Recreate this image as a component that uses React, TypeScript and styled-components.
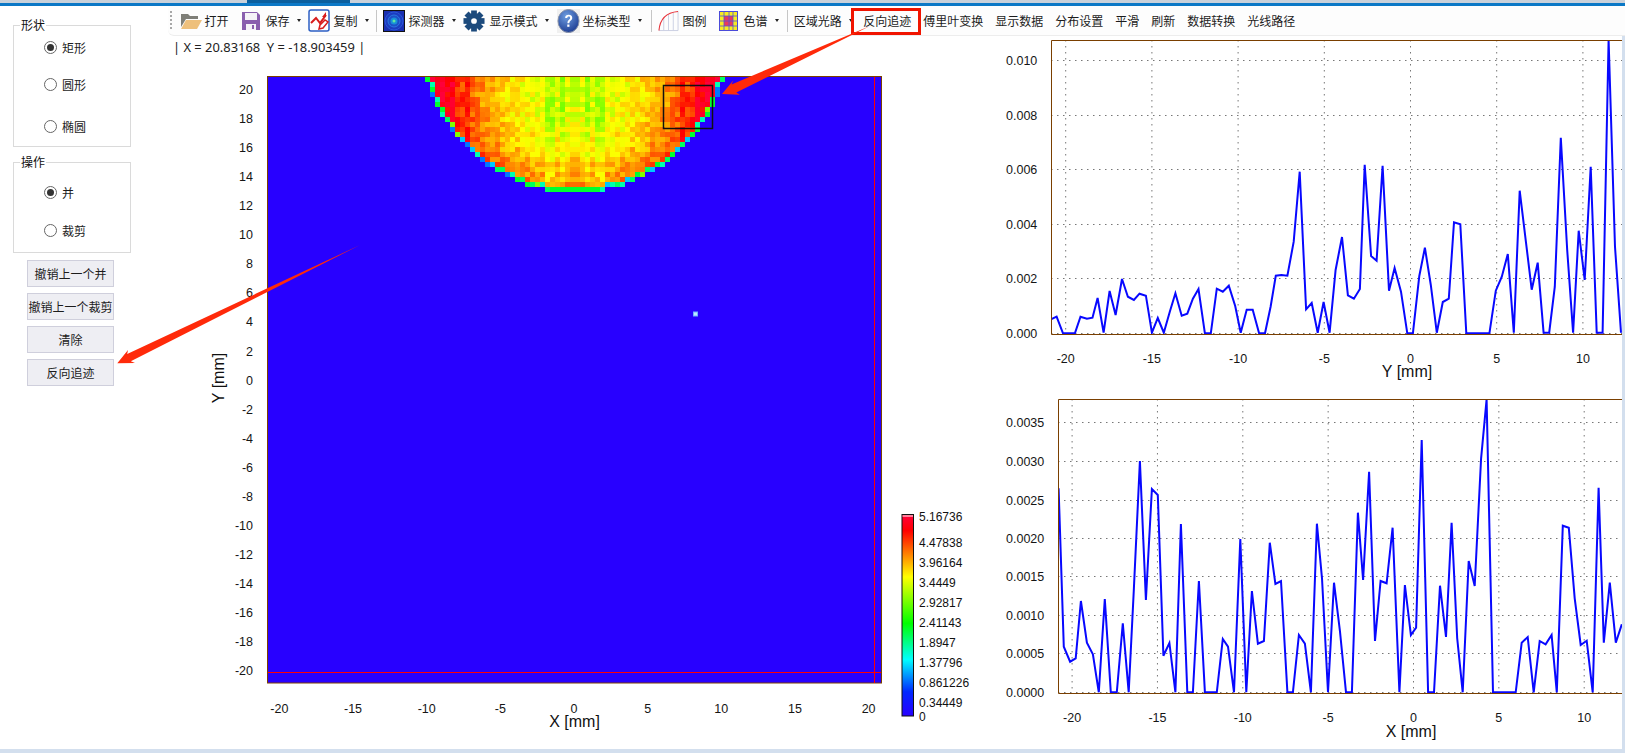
import { useMemo } from 'react';
import styled, { createGlobalStyle } from 'styled-components';

const CJK = `"Noto Sans CJK SC", "Noto Sans", sans-serif`;
const PLOT_BLUE = '#2800ff';
const BROWN = '#7a3f00';

// samples read off the screenshot, in crop pixels (x / 2.509, y / 3)
const PROFILE_Y = [
  [128, 868], [142, 860], [158, 910], [188, 910], [202, 860], [218, 866], [232, 863], [245, 804], [260, 908], [275, 783],
  [290, 855], [306, 747], [321, 800], [336, 810], [350, 791], [366, 797], [381, 908], [396, 864], [411, 908], [426, 845],
  [440, 790], [456, 857], [470, 851], [484, 806], [498, 777], [514, 910], [529, 910], [544, 776], [559, 785], [574, 767],
  [590, 828], [604, 908], [619, 839], [634, 839], [650, 910], [665, 910], [679, 830], [692, 737], [706, 735], [721, 737],
  [737, 635], [752, 425], [768, 838], [782, 819], [797, 908], [812, 816], [827, 908], [842, 720], [858, 621], [873, 796],
  [888, 806], [903, 777], [915, 404], [931, 678], [945, 692], [960, 407], [976, 782], [990, 714], [1006, 785], [1022, 910],
  [1036, 910], [1052, 738], [1066, 653], [1081, 765], [1096, 908], [1111, 816], [1126, 806], [1139, 577], [1155, 583], [1170, 910],
  [1228, 910], [1244, 782], [1259, 740], [1274, 672], [1289, 908], [1304, 482], [1320, 640], [1334, 779], [1349, 698], [1364, 908],
  [1378, 908], [1392, 770], [1407, 323], [1423, 660], [1438, 908], [1452, 602], [1467, 750], [1482, 410], [1497, 908], [1512, 908],
  [1527, 30], [1543, 650], [1558, 908],
];

const PROFILE_X = [
  [147, 340], [160, 815], [176, 860], [190, 850], [203, 678], [218, 803], [233, 838], [248, 952], [263, 672], [278, 952],
  [293, 952], [308, 745], [323, 952], [336, 640], [351, 258], [366, 675], [381, 342], [396, 360], [410, 842], [425, 804],
  [440, 952], [454, 447], [470, 952], [484, 952], [499, 618], [514, 952], [544, 952], [559, 792], [572, 815], [587, 952],
  [603, 492], [618, 952], [632, 648], [647, 806], [662, 798], [677, 503], [691, 627], [705, 618], [721, 952], [735, 952],
  [750, 780], [765, 806], [780, 952], [795, 446], [808, 610], [823, 952], [838, 623], [853, 770], [868, 952], [883, 952],
  [898, 413], [911, 615], [926, 290], [941, 798], [955, 618], [970, 625], [985, 458], [1002, 952], [1016, 630], [1031, 780],
  [1044, 758], [1058, 195], [1074, 952], [1089, 952], [1104, 632], [1119, 786], [1133, 443], [1147, 790], [1161, 952], [1176, 558],
  [1191, 633], [1207, 250], [1221, 73], [1237, 952], [1294, 952], [1309, 803], [1324, 786], [1339, 952], [1354, 798], [1369, 808],
  [1384, 780], [1397, 952], [1412, 452], [1427, 458], [1442, 670], [1457, 810], [1472, 797], [1487, 952], [1502, 338], [1515, 803],
  [1530, 623], [1545, 803], [1560, 748],
];

const GlobalStyle = createGlobalStyle`
  html, body {
    margin: 0;
    height: 100%;
    background: #fff;
    overflow: hidden;
  }
  #root {
    height: 100%;
  }
`;

const Page = styled.div`
  position: relative;
  width: 1625px;
  height: 753px;
  display: flex;
  flex-direction: column;
  overflow: hidden;
  font-family: ${CJK};
  font-size: 12px;
  color: #1c1c1c;
`;

const TopStrip = styled.div`
  flex: 0 0 auto;
  height: 3px;
  padding-left: 247px;
  background: #c9d1da;
  border-bottom: 3px solid #0b78c6;
`;

const ActiveTab = styled.div`
  width: 103px;
  height: 3px;
  background: #0b5f9e;
`;

const Main = styled.div`
  flex: 1;
  min-height: 0;
  display: flex;
`;

const BottomBar = styled.div`
  flex: 0 0 4px;
  background: #d3dfee;
`;

const SidePanel = styled.aside`
  flex: 0 0 168px;
  padding: 11px 0 0 13px;
  box-sizing: border-box;
  display: flex;
  flex-direction: column;
`;

const GroupBox = styled.fieldset<{ $height: number }>`
  width: 118px;
  height: ${(p) => p.$height}px;
  margin: 0 0 7px;
  padding: 0;
  box-sizing: border-box;
  border: 1px solid #dadada;
  min-inline-size: 0;
`;

const GroupTitle = styled.legend`
  margin-left: 6px;
  padding: 0 1px;
  line-height: 16px;
  font-size: 12px;
  color: #111;
`;

const RadioRow = styled.label<{ $top: number }>`
  display: flex;
  align-items: center;
  gap: 5px;
  height: 16px;
  margin: ${(p) => p.$top}px 0 0 30px;
`;

const RadioMark = styled.span<{ $checked?: boolean }>`
  width: 13px;
  height: 13px;
  box-sizing: border-box;
  border-radius: 50%;
  border: 1px solid #666;
  background: #fff;
  display: flex;
  align-items: center;
  justify-content: center;

  &::after {
    content: '';
    display: ${(p) => (p.$checked ? 'block' : 'none')};
    width: 7px;
    height: 7px;
    border-radius: 50%;
    background: #333;
  }
`;

const ActionStack = styled.div`
  display: flex;
  flex-direction: column;
  gap: 6px;
  margin-left: 14px;
`;

const ActionButton = styled.button`
  width: 87px;
  height: 27px;
  padding: 0;
  box-sizing: border-box;
  border: 1px solid #cfcfdc;
  background: #eeeef3;
  font-family: ${CJK};
  font-size: 12px;
  color: #1c1c1c;
  white-space: nowrap;
  overflow: hidden;
`;

const Workspace = styled.div`
  flex: 1;
  min-width: 0;
  display: flex;
  flex-direction: column;
`;

const Toolbar = styled.div`
  flex: 0 0 30px;
  display: flex;
  align-items: center;
  box-sizing: border-box;
  background: #fdfdfd;
  border-bottom: 1px solid #ededed;
  border-bottom-left-radius: 6px;
  white-space: nowrap;
`;

const Grip = styled.span`
  width: 2px;
  height: 20px;
  margin: 0 7.5px 0 2px;
  background: repeating-linear-gradient(to bottom, #a8a8a8 0 2px, transparent 2px 4px);
`;

const ToolButton = styled.div<{ $gap?: number; $end?: number }>`
  display: flex;
  align-items: center;
  margin-right: ${(p) => p.$end ?? 12}px;
  line-height: 16px;

  svg {
    margin-right: ${(p) => p.$gap ?? 3}px;
  }
`;

const Caret = styled.span`
  width: 0;
  height: 0;
  margin-left: 7px;
  border-left: 2.5px solid transparent;
  border-right: 2.5px solid transparent;
  border-top: 3px solid #222;
`;

const ToolSeparator = styled.span`
  width: 1px;
  height: 22px;
  margin-right: 6px;
  background: #c6c6c6;
`;

const HighlightedItem = styled.div`
  position: relative;
  margin: 0 12px 0 3.5px;
  line-height: 16px;

  &::after {
    content: '';
    position: absolute;
    left: -12px;
    right: -9.5px;
    top: -5px;
    bottom: -6px;
    border: 3px solid #f01400;
  }
`;

const Content = styled.div`
  flex: 1;
  min-height: 0;
  display: flex;
`;

const CenterColumn = styled.section`
  flex: 0 0 832px;
  display: flex;
  flex-direction: column;
`;

const StatusText = styled.div`
  flex: 0 0 22px;
  padding-left: 5px;
  line-height: 22px;
  font-family: 'Noto Sans', sans-serif;
  font-size: 12.9px;
  white-space: pre;
  color: #222;
`;

const ProfileColumn = styled.section`
  flex: 1;
  display: flex;
  flex-direction: column;
`;

const RightEdge = styled.div`
  flex: 0 0 3px;
  background: #d3dfee;
`;

const DrawingSvg = styled.svg`
  display: block;
  overflow: hidden;
`;

const TickLabel = styled.text`
  font-family: 'Liberation Sans', Arial, sans-serif;
  font-size: 12.5px;
  fill: #151515;
`;

const AxisLabel = styled.text`
  font-family: 'Liberation Sans', Arial, sans-serif;
  font-size: 16px;
  fill: #111;
  text-anchor: middle;
`;

const ScaleLabel = styled.text`
  font-family: 'Liberation Sans', Arial, sans-serif;
  font-size: 12px;
  fill: #111;
`;

const ArrowLayer = styled.svg`
  position: absolute;
  left: 0;
  top: 0;
  pointer-events: none;
`;

const jetStops: [number, number[]][] = [
  [0, [40, 0, 255]],
  [0.12, [0, 40, 255]],
  [0.28, [0, 255, 255]],
  [0.46, [0, 255, 0]],
  [0.69, [255, 255, 0]],
  [0.92, [255, 0, 0]],
  [1, [255, 0, 60]],
];

function jet(v: number) {
  const t = Math.max(0, Math.min(1, v));
  for (let i = 1; i < jetStops.length; i++) {
    const [pos, rgb] = jetStops[i];
    const [prevPos, prev] = jetStops[i - 1];
    if (t <= pos) {
      const f = (t - prevPos) / (pos - prevPos);
      const c = rgb.map((n, k) => Math.round(prev[k] + (n - prev[k]) * f));
      return `rgb(${c.join(',')})`;
    }
  }
  return 'rgb(255,0,60)';
}

function hash(a: number, b: number) {
  const s = Math.sin(a * 12.9898 + b * 78.233) * 43758.5453;
  return s - Math.floor(s);
}

const RIM = ['#00c8ff', '#00ff60', '#80ff00', '#00ffb0', '#0078ff', '#00ff30'];

function buildHeatCells() {
  const inside = (i: number, j: number) => Math.hypot(5 * i + 2.5, 77 + 5 * j + 2.5 - 39.6) <= 152.9;
  const cells: { x: number; y: number; fill: string }[] = [];
  for (let j = 0; j < 24; j++) {
    for (let i = -31; i < 31; i++) {
      if (!inside(i, j)) continue;
      const x = 575 + 5 * i;
      const y = 77 + 5 * j;
      const side = i < 0 ? -i - 1 : i;
      const rim = !inside(i - 1, j) || !inside(i + 1, j) || !inside(i, j + 1);
      if (rim) {
        const pick = j === 22 && side < 5 ? 5 : Math.floor(hash(i + 40, j) * RIM.length);
        cells.push({ x, y, fill: RIM[pick] });
        continue;
      }
      const dx = (side + 0.5) * 5;
      const dy = y - 100;
      let v = 0.66 + 0.27 * Math.pow(dx / 125, 2.5);
      if (dy > 0) v += 0.17 * Math.pow(dy / 90, 2);
      v += (hash(side, j) - 0.5) * 0.1;
      if (side === 2 || side === 5 || side === 4) v -= 0.05;
      if (side === 21 || side === 24) v += 0.04;
      cells.push({ x, y, fill: jet(v) });
    }
  }
  return cells;
}

const toPoints = (samples: number[][], ox: number, oy: number) =>
  samples.map(([x, y]) => `${(ox + x / 2.509).toFixed(1)},${(oy + y / 3).toFixed(1)}`).join(' ');

const HeatPlot = () => {
  const cells = useMemo(buildHeatCells, []);
  const yTicks = Array.from({ length: 21 }, (_, n) => 20 - n * 2);
  const xTicks = [-20, -15, -10, -5, 0, 5, 10, 15, 20];
  const scale = [
    ['5.16736', 516], ['4.47838', 542.7], ['3.96164', 562.7], ['3.4449', 582.7], ['2.92817', 602.7],
    ['2.41143', 622.7], ['1.8947', 642.7], ['1.37796', 662.7], ['0.861226', 682.7], ['0.34449', 702.7], ['0', 716],
  ] as const;

  return (
    <DrawingSvg width={832} height={691} viewBox='168 58 832 691'>
      <defs>
        <linearGradient id='jet' x1='0' y1='1' x2='0' y2='0'>
          {jetStops.map(([pos, rgb]) => (
            <stop key={pos} offset={pos} stopColor={`rgb(${rgb.join(',')})`} />
          ))}
        </linearGradient>
      </defs>
      <rect x={267.5} y={76.5} width={614} height={606.5} fill={PLOT_BLUE} stroke={BROWN} />
      {cells.map((c) => (
        <rect key={`${c.x}-${c.y}`} x={c.x} y={c.y} width={5} height={5} fill={c.fill} />
      ))}
      <rect x={663.5} y={85.5} width={49} height={43} fill='none' stroke='#111' strokeWidth={1.5} />
      <rect x={693.5} y={312} width={4} height={4} fill='#bfe6ff' stroke='#6fb4ff' strokeWidth={1} />
      <line x1={268} y1={672.5} x2={881} y2={672.5} stroke='#ff0000' />
      <line x1={874.5} y1={77} x2={874.5} y2={683} stroke='#ff0000' />
      {yTicks.map((v) => (
        <TickLabel key={v} x={253} y={380.1 - 14.53 * v + 4.5} textAnchor='end'>
          {v}
        </TickLabel>
      ))}
      {xTicks.map((v) => (
        <TickLabel key={v} x={574 + 14.73 * v} y={712.5} textAnchor='middle'>
          {v}
        </TickLabel>
      ))}
      <AxisLabel x={574.5} y={727}>X [mm]</AxisLabel>
      <AxisLabel x={224} y={378} transform='rotate(-90 224 378)'>Y [mm]</AxisLabel>
      <rect x={902} y={514.5} width={11.5} height={201.5} fill='url(#jet)' stroke='#111' />
      <line x1={902.5} y1={516} x2={913} y2={516} stroke='#fff' />
      {scale.map(([text, y]) => (
        <ScaleLabel key={text} x={919} y={y + 4.5}>
          {text}
        </ScaleLabel>
      ))}
    </DrawingSvg>
  );
};

interface ProfileProps {
  top: number;
  height: number;
  plotLeft: number;
  plotTop: number;
  plotBottom: number;
  yTicks: (readonly [string, number])[];
  xTicks: number[];
  xZero: number;
  xUnit: number;
  xLabelY: number;
  label: string;
  labelX: number;
  labelY: number;
  points: string;
  clipId: string;
}

const ProfileChart = ({
  top, height, plotLeft, plotTop, plotBottom, yTicks, xTicks, xZero, xUnit, xLabelY, label, labelX, labelY, points, clipId,
}: ProfileProps) => (
  <DrawingSvg width={622} height={height} viewBox={`1000 ${top} 622 ${height}`}>
    <defs>
      <clipPath id={clipId}>
        <rect x={plotLeft} y={plotTop} width={1622 - plotLeft} height={plotBottom - plotTop} />
      </clipPath>
    </defs>
    {yTicks.map(([, y]) => (
      <line key={y} x1={plotLeft} x2={1622} y1={y} y2={y} stroke='#777' strokeDasharray='1.5 4.5' />
    ))}
    {xTicks.map((v) => (
      <line
        key={v}
        x1={xZero + xUnit * v}
        x2={xZero + xUnit * v}
        y1={plotTop}
        y2={plotBottom}
        stroke='#777'
        strokeDasharray='1.5 4.5'
      />
    ))}
    <polyline points={points} fill='none' stroke='#0808ff' strokeWidth={2} clipPath={`url(#${clipId})`} />
    <path
      d={`M1622 ${plotTop + 0.5}H${plotLeft + 0.5}V${plotBottom + 0.5}H1622`}
      fill='none'
      stroke={BROWN}
    />
    {yTicks.map(([text, y]) => (
      <TickLabel key={text} x={1006} y={y + 4.5}>
        {text}
      </TickLabel>
    ))}
    {xTicks.map((v) => (
      <TickLabel key={v} x={xZero + xUnit * v} y={xLabelY} textAnchor='middle'>
        {v}
      </TickLabel>
    ))}
    <AxisLabel x={labelX} y={labelY}>{label}</AxisLabel>
  </DrawingSvg>
);

const OpenIcon = () => (
  <svg width={22} height={18} viewBox='0 0 22 18'>
    <path d='M1 2h7l2 2h8v3H6L1 15z' fill='#7f7f78' />
    <path d='M1 17l5-9h16l-5 9z' fill='#eec07c' />
  </svg>
);

const SaveIcon = () => (
  <svg width={20} height={20} viewBox='0 0 20 20'>
    <path d='M1 1h15l3 3v15H1z' fill='#8a5fae' />
    <rect x={4} y={2} width={12} height={7} fill='#f5f3f7' />
    <rect x={5} y={13} width={10} height={6} fill='#f5f3f7' />
    <rect x={11} y={14} width={2} height={4} fill='#8a5fae' />
  </svg>
);

const CopyIcon = () => (
  <svg width={22} height={23} viewBox='0 0 22 23'>
    <rect x={1} y={1} width={20} height={21} rx={2} fill='#fff' stroke='#2c5fc4' strokeWidth={1.5} />
    <path d='M3 14l5-5 4 5 6-8' fill='none' stroke='#d91c1c' strokeWidth={2} />
    <path d='M18 3v5h-4z' fill='#d91c1c' />
    <path d='M11 20l1-4 5-5 3 2-5 6z' fill='#fff' stroke='#d91c1c' strokeWidth={1.5} />
  </svg>
);

const DetectorIcon = () => (
  <svg width={22} height={22} viewBox='0 0 22 22'>
    <rect x={0.5} y={0.5} width={21} height={21} fill='#1a2fb0' stroke='#111' />
    <circle cx={11} cy={11} r={9} fill='#1c3cc0' stroke='#2a58d8' />
    <circle cx={11} cy={11} r={6} fill='#1c50c8' stroke='#2a78e0' />
    <circle cx={11} cy={11} r={3.5} fill='#1890d8' />
    <circle cx={11} cy={11} r={1.5} fill='#60e8a0' />
  </svg>
);

const GearIcon = () => {
  const teeth = Array.from({ length: 8 }, (_, n) => n * 45);
  return (
    <svg width={22} height={22} viewBox='0 0 23 23'>
      {teeth.map((deg) => (
        <rect key={deg} x={8.5} y={0.5} width={6} height={6} fill='#1c4a7c' transform={`rotate(${deg} 11.5 11.5)`} />
      ))}
      <circle cx={11.5} cy={11.5} r={8} fill='#1c4a7c' />
      <circle cx={11.5} cy={11.5} r={3} fill='#fff' />
    </svg>
  );
};

const HelpIcon = () => (
  <svg width={23} height={24} viewBox='0 0 24 24' preserveAspectRatio='none'>
    <rect width={24} height={24} fill='#f0f0f0' />
    <defs>
      <radialGradient id='helpFill' cx='0.4' cy='0.3' r='0.8'>
        <stop offset='0' stopColor='#6f9ee0' />
        <stop offset='1' stopColor='#15338c' />
      </radialGradient>
    </defs>
    <ellipse cx={12} cy={12} rx={11} ry={11.5} fill='url(#helpFill)' stroke='#8a93a8' />
    <path
      d='M8.5 9c0-2 1.5-3.2 3.7-3.2s3.7 1.2 3.7 3c0 2.8-3 2.6-3 5.4h-2c0-3.6 2.8-3.4 2.8-5.3 0-.8-.6-1.3-1.5-1.3S10.7 8.2 10.7 9z'
      fill='#fff'
    />
    <rect x={10.7} y={15.5} width={2.3} height={2.3} fill='#fff' />
  </svg>
);

const LegendIcon = () => (
  <svg width={21} height={22} viewBox='0 0 22 22'>
    <path d='M6 8v13M11 4v17M16 2v19M1 21h20' stroke='#c9cfe2' fill='none' />
    <path d='M21 1v20' stroke='#c9cfe2' fill='none' />
    <path d='M1 21C2 9 9 2 21 1' fill='none' stroke='#e8333a' strokeWidth={1.2} />
  </svg>
);

const SpectrumIcon = () => (
  <svg width={19} height={20} viewBox='0 0 19 20'>
    <rect x={0.5} y={0.5} width={18} height={19} fill='#f8ec20' stroke='#4a4ad8' />
    <rect x={5} y={5} width={9} height={10} fill='#e83a5c' />
    <path d='M0 5h19M0 10h19M0 15h19M5 0v20M10 0v20M14 0v20' stroke='#5050e0' strokeWidth={0.8} />
  </svg>
);

const menuButtons = ['傅里叶变换', '显示数据', '分布设置', '平滑', '刷新', '数据转换', '光线路径'];

const App = () => (
  <>
    <GlobalStyle />
    <Page>
      <TopStrip>
        <ActiveTab />
      </TopStrip>
      <Main>
        <SidePanel>
          <GroupBox $height={130}>
            <GroupTitle>形状</GroupTitle>
            <RadioRow $top={6}><RadioMark $checked />矩形</RadioRow>
            <RadioRow $top={21}><RadioMark />圆形</RadioRow>
            <RadioRow $top={26}><RadioMark />椭圆</RadioRow>
          </GroupBox>
          <GroupBox $height={99}>
            <GroupTitle>操作</GroupTitle>
            <RadioRow $top={14}><RadioMark $checked />并</RadioRow>
            <RadioRow $top={22}><RadioMark />裁剪</RadioRow>
          </GroupBox>
          <ActionStack>
            <ActionButton>撤销上一个并</ActionButton>
            <ActionButton>撤销上一个裁剪</ActionButton>
            <ActionButton>清除</ActionButton>
            <ActionButton>反向追迹</ActionButton>
          </ActionStack>
        </SidePanel>
        <Workspace>
          <Toolbar>
            <Grip />
            <ToolButton $gap={3}><OpenIcon />打开</ToolButton>
            <ToolButton $gap={5} $end={7}><SaveIcon />保存<Caret /></ToolButton>
            <ToolButton $gap={4} $end={7}><CopyIcon />复制<Caret /></ToolButton>
            <ToolSeparator />
            <ToolButton $gap={4} $end={7}><DetectorIcon />探测器<Caret /></ToolButton>
            <ToolButton $gap={5} $end={8}><GearIcon />显示模式<Caret /></ToolButton>
            <ToolButton $gap={3} $end={9}><HelpIcon />坐标类型<Caret /></ToolButton>
            <ToolSeparator />
            <ToolButton $gap={4}><LegendIcon />图例</ToolButton>
            <ToolButton $gap={6} $end={8}><SpectrumIcon />色谱<Caret /></ToolButton>
            <ToolSeparator />
            <ToolButton $end={7}>区域光路<Caret /></ToolButton>
            <HighlightedItem>反向追迹</HighlightedItem>
            {menuButtons.map((name) => (
              <ToolButton key={name}>{name}</ToolButton>
            ))}
          </Toolbar>
          <Content>
            <CenterColumn>
              <StatusText>{'| X = 20.83168  Y = -18.903459 |'}</StatusText>
              <HeatPlot />
            </CenterColumn>
            <ProfileColumn>
              <ProfileChart
                top={36}
                height={354}
                plotLeft={1051}
                plotTop={40}
                plotBottom={334}
                yTicks={[['0.010', 60.5], ['0.008', 115.5], ['0.006', 169.5], ['0.004', 224.5], ['0.002', 278.5], ['0.000', 333.5]]}
                xTicks={[-20, -15, -10, -5, 0, 5, 10]}
                xZero={1410.5}
                xUnit={17.24}
                xLabelY={363}
                label='Y [mm]'
                labelX={1407}
                labelY={377}
                points={toPoints(PROFILE_Y, 1000, 30)}
                clipId='profileY'
              />
              <ProfileChart
                top={390}
                height={359}
                plotLeft={1058}
                plotTop={399}
                plotBottom={693}
                yTicks={[['0.0035', 422.5], ['0.0030', 461.5], ['0.0025', 500.5], ['0.0020', 538.5], ['0.0015', 576.5], ['0.0010', 615.5], ['0.0005', 653.5], ['0.0000', 692.5]]}
                xTicks={[-20, -15, -10, -5, 0, 5, 10]}
                xZero={1413.5}
                xUnit={17.07}
                xLabelY={722}
                label='X [mm]'
                labelX={1411}
                labelY={737}
                points={toPoints(PROFILE_X, 1000, 375)}
                clipId='profileX'
              />
            </ProfileColumn>
            <RightEdge />
          </Content>
        </Workspace>
      </Main>
      <BottomBar />
      <ArrowLayer width={1625} height={753} viewBox='0 0 1625 753'>
        <polygon points='870,26 731.5,84.5 733.4,80.2 722,94 739.8,94.8 736.3,92.4' fill='#ff2a0a' />
        <polygon points='360,245 127.2,353.9 128,350 117.3,363.3 135,363 130.8,361.3' fill='#ff2a0a' />
      </ArrowLayer>
    </Page>
  </>
);

export default App;
